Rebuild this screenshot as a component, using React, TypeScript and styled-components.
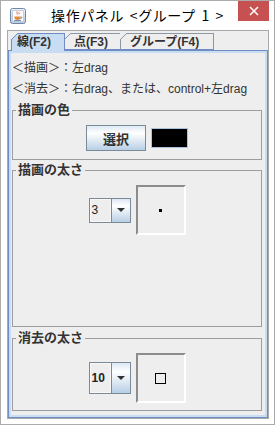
import React from "react"
import styled, { createGlobalStyle } from "styled-components"

const GlobalStyle = createGlobalStyle`
  * { box-sizing: border-box; }
  html, body { margin: 0; padding: 0; background: #fff; }
  body {
    font-family: "Liberation Sans", "Noto Sans CJK JP", sans-serif;
    color: #333;
  }
`

const Frame = styled.div`
  width: 275px;
  height: 425px;
  border: 1px solid #ababab;
  background: #fff;
  display: flex;
  flex-direction: column;
`

const TitleBar = styled.div`
  flex: none;
  height: 29px;
  display: grid;
  grid-template-columns: 1fr auto 1fr;
  align-items: start;
`

const AppIcon = styled.div`
  padding: 7px 0 0 9px;
  line-height: 0;
`

const Title = styled.div`
  font-family: "Noto Sans CJK JP", sans-serif;
  font-size: 14px;
  letter-spacing: 0.6px;
  word-spacing: 2px;
  line-height: 29px;
  color: #000;
  white-space: nowrap;
`

const CloseButton = styled.div`
  justify-self: end;
  width: 31px;
  height: 20px;
  margin-right: 5px;
  background: #c75050;
  display: flex;
  align-items: center;
  justify-content: center;
`

const Client = styled.div`
  flex: 1;
  margin: 0 5px 5px 6px;
  border: 1px solid #a9a9a9;
  background: #eeeeee;
  padding-top: 2px;
  display: flex;
  flex-direction: column;
`

const TabRow = styled.div`
  display: flex;
  align-items: flex-start;
  height: 17px;
  padding-left: 3px;
`

const Tab = styled.div<{ $w: number; $pad: number; $active?: boolean }>`
  position: relative;
  z-index: ${p => (p.$active ? 2 : 1)};
  width: ${p => p.$w}px;
  height: ${p => (p.$active ? 18 : 17)}px;
  margin-left: -1px;
  &:first-child { margin-left: 0; }
  padding-left: ${p => p.$pad}px;
  background: ${p => (p.$active ? "#c8ddf2" : "#eeeeee")};
  border: 1px solid ${p => (p.$active ? "#6f8dc4" : "#8a97a4")};
  border-bottom: ${p => (p.$active ? "none" : "1px solid #6f8dc4")};
  font-weight: bold;
  font-size: 12px;
  line-height: 16px;
  white-space: nowrap;
  color: #333;

  &::before {
    content: "";
    position: absolute;
    top: -1px;
    left: -1px;
    width: 7px;
    height: 7px;
    background: linear-gradient(
      to bottom right,
      #eeeeee 0 calc(50% - 0.7px),
      ${p => (p.$active ? "#6f8dc4" : "#8a97a4")} calc(50% - 0.7px) calc(50% + 0.7px),
      ${p => (p.$active ? "#c8ddf2" : "#eeeeee")} calc(50% + 0.7px)
    );
  }
`

const Panel = styled.div`
  flex: 1;
  border: 1px solid #6f8dc4;
  box-shadow: inset 0 0 0 2px #c8ddf2;
  background: #eeeeee;
  padding: 7px 5px 3px 3px;
  display: flex;
  flex-direction: column;
`

const Hint = styled.div`
  font-size: 12px;
  line-height: 21px;
  white-space: nowrap;
  color: #333;
`

const Group = styled.fieldset<{ $h: number; $gap: number }>`
  margin: ${p => p.$gap}px 0 0 0;
  padding: 8px 0 0 0;
  min-width: 0;
  height: ${p => p.$h}px;
  border: 1px solid #9d9d9d;
  border-radius: 0;
`

const Legend = styled.legend`
  margin-left: 3px;
  padding: 0 2px;
  font-size: 13px;
  font-weight: bold;
  line-height: 14px;
  color: #333;
`

const Row = styled.div<{ $align?: string }>`
  display: flex;
  justify-content: center;
  align-items: ${p => p.$align || "center"};
  gap: 5px;
`

const gradient = "linear-gradient(to bottom, #dde8f3 0%, #ffffff 30%, #b8cfe5 100%)"

const PushButton = styled.button`
  width: 60px;
  height: 26px;
  padding: 0;
  border: 1px solid #7a8a99;
  border-radius: 0;
  background: ${gradient};
  font-family: "Liberation Sans", "Noto Sans CJK JP", sans-serif;
  font-size: 13px;
  font-weight: bold;
  color: #333;
`

const Swatch = styled.div<{ $color: string }>`
  width: 37px;
  height: 20px;
  background: ${p => p.$color};
  border: 1px solid #a8c3e0;
`

const Combo = styled.div<{ $h: number }>`
  width: 42px;
  height: ${p => p.$h}px;
  border: 1px solid #7a8a99;
  display: flex;
`

const ComboValue = styled.div<{ $bold?: boolean }>`
  width: 21px;
  background: #eeeeee;
  box-shadow: inset 0 0 0 1px #f8f8f8;
  font-size: 12px;
  font-weight: ${p => (p.$bold ? "bold" : "normal")};
  padding-left: 2px;
  display: flex;
  align-items: center;
  color: #222;
`

const ComboArrow = styled.div`
  flex: 1;
  border-left: 1px solid #7a8a99;
  background: ${gradient};
  display: flex;
  align-items: center;
  justify-content: center;
`

const Preview = styled.div`
  width: 50px;
  height: 50px;
  border-style: solid;
  border-width: 2px;
  border-color: #8c8c8c #ffffff #ffffff #8c8c8c;
  background: #eeeeee;
  display: flex;
  align-items: center;
  justify-content: center;
`

const Brush = styled.div<{ $size: number; $hollow?: boolean }>`
  width: ${p => p.$size}px;
  height: ${p => p.$size}px;
  background: ${p => (p.$hollow ? "transparent" : "#000")};
  border: ${p => (p.$hollow ? "1px solid #000" : "none")};
`

const JavaIcon = () => (
  <svg width="16" height="16" viewBox="0 0 16 16">
    <defs>
      <linearGradient id="jg" x1="0" y1="0" x2="0" y2="1">
        <stop offset="0" stopColor="#f2f5f9" />
        <stop offset="1" stopColor="#b7c7da" />
      </linearGradient>
    </defs>
    <rect x="0.5" y="0.5" width="15" height="15" rx="2" fill="url(#jg)" stroke="#6f87a6" />
    <rect x="2.5" y="2.5" width="11" height="11" fill="#fbfcfd" stroke="#c3cfdc" />
    <path d="M7 3.5c-1 1 1 1.5 0 3M9 4c-.8.8.8 1.2 0 2.4" stroke="#e0622a" strokeWidth="0.9" fill="none" />
    <path d="M4.5 8.5h6v1.5c0 1.3-1.2 2-3 2s-3-.7-3-2z" fill="#e98a2f" />
    <path d="M10.5 9h1c.6 0 .6 1.2-.1 1.3l-1 .2" stroke="#4b7bb4" strokeWidth="0.8" fill="none" />
    <path d="M4 12.6h7" stroke="#4b7bb4" strokeWidth="0.9" />
  </svg>
)

const CloseGlyph = () => (
  <svg width="10" height="10" viewBox="0 0 10 10">
    <path d="M1 1L9 9M9 1L1 9" stroke="#fff" strokeWidth="1.5" />
  </svg>
)

const DownArrow = () => (
  <svg width="8" height="4" viewBox="0 0 8 4">
    <polygon points="0,0 8,0 4,4" fill="#333" />
  </svg>
)

const SizeChooser = ({ value, bold, comboH, brush }: { value: string; bold?: boolean; comboH: number; brush: React.ReactNode }) => (
  <Row>
    <Combo $h={comboH}>
      <ComboValue $bold={bold}>{value}</ComboValue>
      <ComboArrow>
        <DownArrow />
      </ComboArrow>
    </Combo>
    <Preview>{brush}</Preview>
  </Row>
)

export default function App() {
  return (
    <>
      <GlobalStyle />
      <Frame>
        <TitleBar>
          <AppIcon>
            <JavaIcon />
          </AppIcon>
          <Title>操作パネル &lt;グループ 1 &gt;</Title>
          <CloseButton>
            <CloseGlyph />
          </CloseButton>
        </TitleBar>
        <Client>
          <TabRow>
            <Tab $w={54} $pad={5} $active>線(F2)</Tab>
            <Tab $w={57} $pad={9}>点(F3)</Tab>
            <Tab $w={94} $pad={9}>グループ(F4)</Tab>
          </TabRow>
          <Panel>
            <Hint>＜描画＞：左drag</Hint>
            <Hint>＜消去＞：右drag、または、control+左drag</Hint>
            <Group $h={57} $gap={3}>
              <Legend>描画の色</Legend>
              <Row>
                <PushButton>選択</PushButton>
                <Swatch $color="#000" />
              </Row>
            </Group>
            <Group $h={164} $gap={3}>
              <Legend>描画の太さ</Legend>
              <SizeChooser value="3" comboH={25} brush={<Brush $size={3} />} />
            </Group>
            <Group $h={80} $gap={4}>
              <Legend>消去の太さ</Legend>
              <SizeChooser value="10" bold comboH={32} brush={<Brush $size={11} $hollow />} />
            </Group>
          </Panel>
        </Client>
      </Frame>
    </>
  )
}
